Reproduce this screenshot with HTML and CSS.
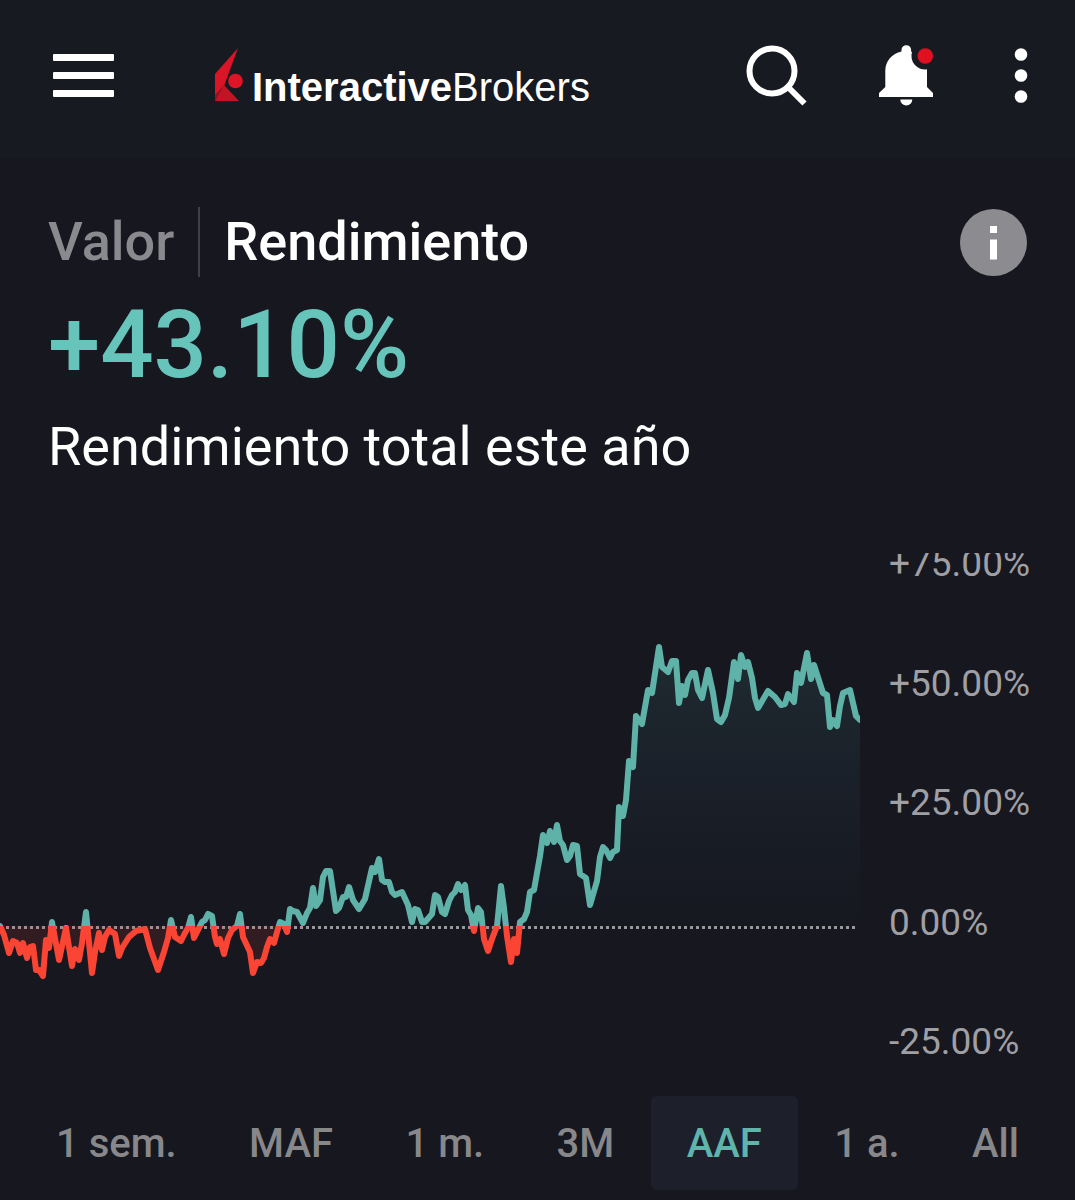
FILE: index.html
```html
<!DOCTYPE html>
<html lang="es">

<head>
  <meta charset="UTF-8">
  <meta name="viewport" content="width=device-width, initial-scale=1.0">
  <title>Rendimiento</title>

  <link rel="stylesheet" href="styles.css">
</head>

<body>
  <header class="topbar">
    <button type="button" class="icon-btn" aria-label="Menú">
      <svg width="61" height="44" viewBox="0 0 61 44" fill="#fff">
        <rect y="0" width="61" height="7" rx="1" />
        <rect y="18" width="61" height="7" rx="1" />
        <rect y="36" width="61" height="7" rx="1" />
      </svg>
    </button>

    <a href="#" class="logo">
      <svg width="28" height="53" viewBox="0 0 28 53">
        <path d="M23 0 0 26V53L9 38Z" fill="#dc1427" />
        <path d="M9 37 0 53H24Z" fill="#c31426" />
        <path d="M9 37 0 53V47Z" fill="#8d1521" />
        <circle cx="20.500" cy="33" r="7.300" fill="#e01427" />
      </svg>
      <span class="logo-text"><b>Interactive</b>Brokers</span>
    </a>

    <div class="actions">
      <button type="button" class="icon-btn" aria-label="Buscar">
        <svg width="64" height="64" viewBox="0 0 64 64" fill="none" stroke="#fff" stroke-width="6">
          <circle cx="30" cy="27" r="22.5" />
          <path d="M46 43 62.500 59.500" />
        </svg>
      </button>
      <button type="button" class="icon-btn" aria-label="Notificaciones">
        <svg width="64" height="64" viewBox="0 0 64 64" fill="#fff">
          <path d="M1 53V49L7.300 43V27C7.300 17 14 9.500 23.500 7.500V6a4.800 4.800 0 0 1 9.600 0V7.500L34 8A13.500 13.500 0 0 0 49 25.300V43L55 49V53Z" />
          <path d="M22.300 55.500h12a6 6 0 0 1-12 0Z" />
          <circle cx="47.300" cy="12" r="7.800" fill="#e01020" />
        </svg>
      </button>
      <button type="button" class="icon-btn" aria-label="Más opciones">
        <svg width="14" height="64" viewBox="0 0 14 64" fill="#fff">
          <circle cx="7" cy="10.500" r="6.300" />
          <circle cx="7" cy="31.500" r="6.300" />
          <circle cx="7" cy="52.500" r="6.300" />
        </svg>
      </button>
    </div>
  </header>

  <main>
    <section class="summary">
      <div class="tabs">
        <button type="button" class="tab">Valor</button>
        <button type="button" class="tab active">Rendimiento</button>
        <button type="button" class="info-btn" aria-label="Información">
          <svg width="67" height="67" viewBox="0 0 67 67">
            <circle cx="33.500" cy="33.500" r="33.500" fill="#8c8b90" />
            <path d="M30 17h7v7h-7zM30 30.500h7v20h-7z" fill="#fff" />
          </svg>
        </button>
      </div>
      <p class="total">+43.10%</p>
      <p class="caption">Rendimiento total este año</p>
    </section>

    <section class="chart">
      <svg class="plot" viewBox="0 553 860 527" preserveAspectRatio="none">
        <defs>
          <linearGradient id="gain-fill" gradientUnits="userSpaceOnUse" x1="0" y1="647" x2="0" y2="926">
            <stop offset="0" stop-color="#5fb2a8" stop-opacity="0.13" />
            <stop offset="1" stop-color="#3a6fa8" stop-opacity="0.01" />
          </linearGradient>
          <clipPath id="above">
            <rect x="0" y="553" width="860" height="373" />
          </clipPath>
          <clipPath id="below">
            <rect x="0" y="926" width="860" height="154" />
          </clipPath>
          <!-- starts and ends on the zero line, outside the visible area -->
          <polyline id="series" points="-20,926 0,926 4,935 9,953 13,941 17,943 20,953 23,943 27,958 30,947 33,946 36,970 39,970
            43,976 46,940 49,948 52,922 59,960 66,928 72,966 75,949 79,960 82,943 86,912 92,973 95,952 99,933 102,950
            105,937 109,930 115,934 119,956 122,948 129,937 136,931 145,929 150,948 158,970 164,952 168,938 171,920
            175,937 181,941 185,933 188,928 191,917 194,938 198,930 202,922 205,920 208,914 212,916 215,937 217,944
            220,939 224,954 228,938 232,930 237,926 240,914 243,937 250,952 253,973 257,962 261,963 264,958 267,947
            270,939 274,943 277,932 280,922 284,924 287,932 290,909 293,911 297,912 303,923 307,913 310,908 313,888
            316,906 320,900 323,877 326,871 330,871 336,911 339,908 343,897 346,897 349,887 353,900 359,909 365,899
            372,868 375,872 379,859 382,880 385,882 389,882 392,892 395,895 402,892 408,905 412,922 415,909 418,910
            422,922 425,922 432,914 435,895 438,897 442,912 445,914 449,901 452,895 455,892 458,884 461,890 465,885
            468,910 471,915 474,931 478,908 481,912 484,939 488,951 492,939 497,926 501,886 504,908 507,936 511,962
            514,939 517,953 520,922 524,919 527,912 530,892 534,890 540,856 543,835 547,843 550,831 554,842 557,825
            560,841 563,845 567,860 570,856 573,845 577,846 580,874 586,878 590,905 597,881 600,857 603,847 606,850
            610,858 613,852 617,850 619,807 623,816 626,800 629,761 633,767 636,716 642,724 648,690 652,693 659,647
            662,667 668,672 672,661 676,661 679,703 682,686 685,695 688,680 692,673 695,673 698,690 702,698 708,670
            713,693 717,719 721,722 725,715 729,698 734,662 738,679 741,655 745,667 748,662 752,678 755,698 758,708
            768,691 775,697 781,705 785,704 788,694 794,702 797,673 801,683 807,653 811,679 814,665 823,693 827,695
            830,727 833,720 837,726 840,706 843,693 850,690 856,716 860,720 880,720 880,926" />
        </defs>
        <line class="zero" x1="6" y1="927.500" x2="858" y2="927.500" />
        <g clip-path="url(#above)">
          <use href="#series" class="gain" />
        </g>
        <g clip-path="url(#below)">
          <use href="#series" class="loss" />
        </g>
      </svg>
      <ul class="axis">
        <li>+75.00%</li>
        <li>+50.00%</li>
        <li>+25.00%</li>
        <li>0.00%</li>
        <li>-25.00%</li>
      </ul>
    </section>

    <nav class="ranges">
      <button type="button">1 sem.</button>
      <button type="button">MAF</button>
      <button type="button">1 m.</button>
      <button type="button">3M</button>
      <button type="button" class="active">AAF</button>
      <button type="button">1 a.</button>
      <button type="button">All</button>
    </nav>
  </main>
</body>

</html>
```

FILE: styles.css
```css
* {
  box-sizing: border-box;
}

body {
  margin: 0;
  background: #16171f;
  color: #fff;
  font-family: Roboto, sans-serif;
}

button {
  border: 0;
  padding: 0;
  background: none;
  font-family: inherit;
  font-weight: 500;
  cursor: pointer;
}

svg {
  display: block;
  flex-shrink: 0;
}

/* top bar */
.topbar {
  display: flex;
  align-items: center;
  height: 158px;
  padding: 0 47px 6px 53px;
  background: #171a21;
}

.icon-btn svg {
  overflow: visible;
}

.logo {
  display: flex;
  align-items: baseline;
  gap: 9px;
  margin-left: 101px;
  color: #fff;
  text-decoration: none;
}

.logo-text {
  font-family: "Liberation Sans", Arial, sans-serif;
  font-size: 40px;
  line-height: 36px;
}

.actions {
  display: flex;
  gap: 72px;
  margin-left: auto;
}

/* summary */
.summary {
  padding: 49px 48px 0;
}

.tabs {
  display: flex;
  align-items: center;
}

.tab {
  height: 70px;
  font-size: 54px;
  line-height: 64px;
  color: #8a898e;
}

.tab.active {
  margin-left: 24px;
  padding-left: 24px;
  border-left: 2px solid #3f4047;
  color: #fff;
}

.info-btn {
  margin-left: auto;
}

.total {
  margin: 12px 0 0;
  font-size: 94px;
  font-weight: 500;
  line-height: 112px;
  color: #67c4ba;
}

.caption {
  margin: 14px 0 0;
  font-size: 54px;
  line-height: 64px;
}

/* chart */
.chart {
  display: flex;
  height: 527px;
  margin-top: 74px;
  overflow: hidden;
}

.plot {
  flex: 1;
  min-width: 0;
  height: 527px;
}

.plot .gain,
.plot .loss {
  stroke-width: 6;
  stroke-linejoin: round;
}

.plot .gain {
  stroke: #5fb2a8;
  fill: url(#gain-fill);
}

.plot .loss {
  stroke: #fa4434;
  fill: rgba(250, 68, 52, 0.12);
}

.plot .zero {
  stroke: #98979a;
  stroke-width: 3;
  stroke-dasharray: 3 3;
}

.axis {
  display: flex;
  flex-direction: column;
  justify-content: space-between;
  width: 215px;
  height: 520px;
  margin: -10px 0 0;
  padding: 0 0 0 29px;
  list-style: none;
  font-size: 37px;
  line-height: 42px;
  color: #a09fa4;
}

/* range selector */
.ranges {
  display: flex;
  justify-content: space-between;
  padding: 16px 20px 10px;
}

.ranges button {
  height: 94px;
  padding: 0 36px;
  border-radius: 6px;
  font-size: 40px;
  color: #88878a;
}

.ranges button.active {
  background: #1d1f2b;
  color: #5fb5ac;
}
```
